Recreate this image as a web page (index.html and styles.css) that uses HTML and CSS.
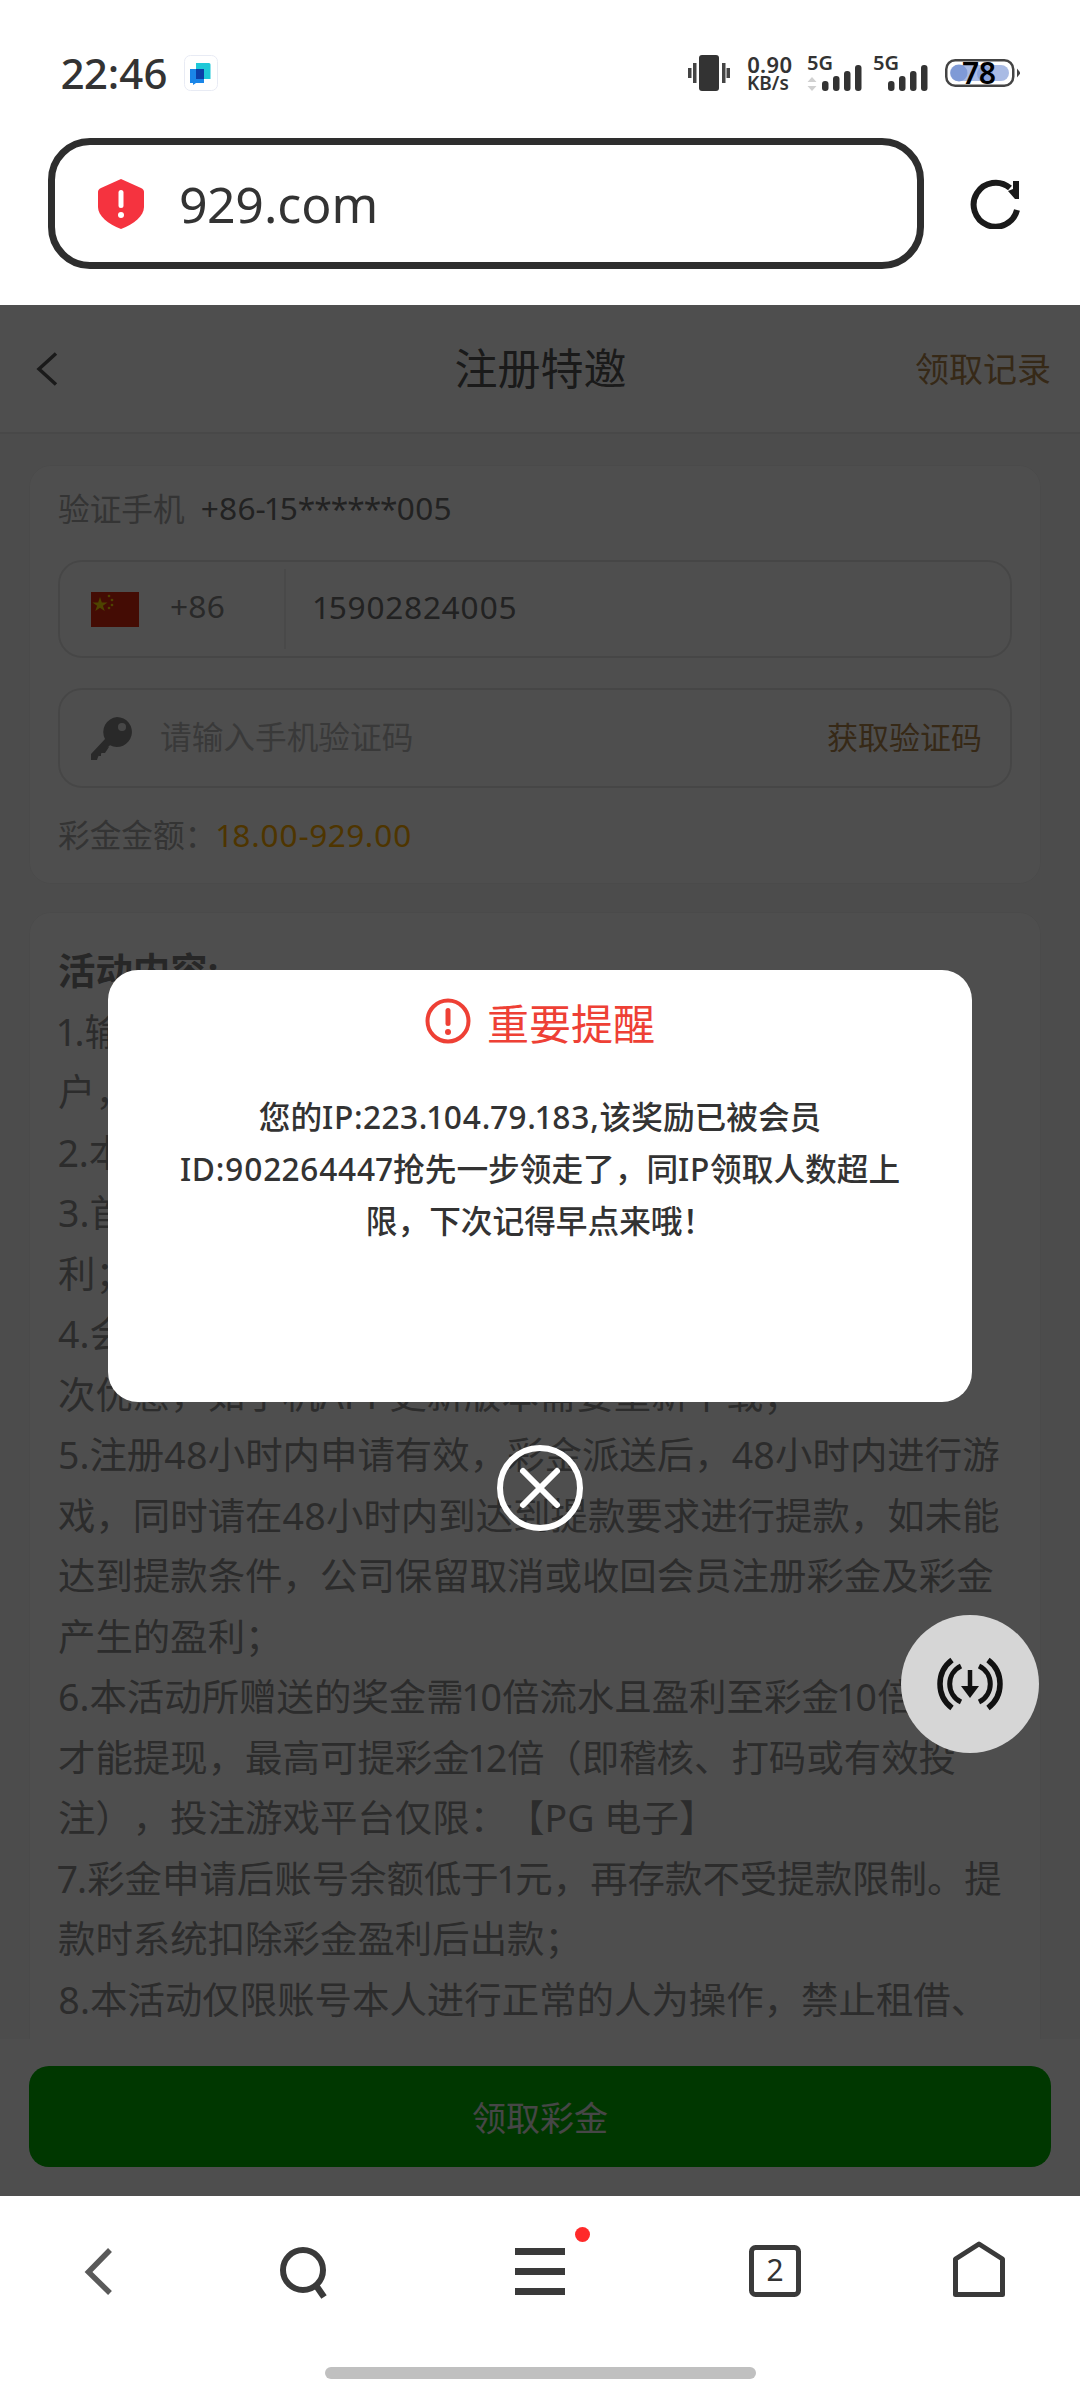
FILE: index.html
```html
<!DOCTYPE html>
<html lang="zh-CN">
<head>
<meta charset="utf-8">
<title>注册特邀</title>
<link rel="stylesheet" href="styles.css">
</head>
<body>
<div class="screen">
  <header class="statusbar">
    <span class="time">22:46</span>
    <svg class="appicon" viewBox="0 0 34 36"><rect x=".5" y=".5" width="33" height="35" rx="6" fill="#fff" stroke="#e8ebf4"/><path d="M12 8h13a1.5 1.5 0 0 1 1.500 1.500V24H12z" fill="#1fc8d8"/><path d="M6 14h14v14h-8l-3 2v-2H6z" fill="#1a86e8"/><rect x="12" y="14" width="8" height="10" fill="#0b3fa8"/></svg>
    <div class="status-right">
      <svg class="vib" viewBox="0 0 42 36"><rect x="11" y="0" width="20" height="36" rx="3" fill="#333"/><rect x="0" y="13" width="3.500" height="10" fill="#444"/><rect x="5" y="8" width="3.500" height="20" fill="#444"/><rect x="34" y="8" width="3.500" height="20" fill="#444"/><rect x="38.500" y="13" width="3.500" height="10" fill="#444"/></svg>
      <div class="speed"><span class="speed-num">0.90</span><span class="speed-unit">KB/s</span></div>
      <div class="net">
        <svg class="net-bars" viewBox="0 0 55 36"><path d="M5 22l4.500 5h-9zM5 36l4.500-5h-9z" fill="#d0d0d0"/><rect x="15" y="26" width="6.500" height="10" rx="3" fill="#333"/><rect x="26" y="21" width="6.500" height="15" rx="3" fill="#333"/><rect x="37" y="16" width="6.500" height="20" rx="3" fill="#333"/><rect x="48" y="10" width="6.500" height="26" rx="3" fill="#333"/></svg>
        <span class="net-label">5G</span>
      </div>
      <div class="net">
        <svg class="net-bars" viewBox="0 0 55 36"><rect x="15" y="26" width="6.500" height="10" rx="3" fill="#333"/><rect x="26" y="21" width="6.500" height="15" rx="3" fill="#333"/><rect x="37" y="16" width="6.500" height="20" rx="3" fill="#333"/><rect x="48" y="10" width="6.500" height="26" rx="3" fill="#333"/></svg>
        <span class="net-label">5G</span>
      </div>
      <div class="battery">
        <svg class="battery-art" viewBox="0 0 75 28"><rect x="1.250" y="1.250" width="67" height="25.500" rx="9" fill="#fff" stroke="#444" stroke-width="2.500"/><rect x="5" y="6" width="59" height="16" rx="8" fill="#a9bbe4"/><circle cx="14" cy="14" r="8.500" fill="#7f9ad6"/><circle cx="40" cy="15" r="8" fill="#8aa3da"/><path d="M72 9.500l3.500 4.500-3.500 4.500z" fill="#444"/></svg>
        <span class="battery-num">78</span>
      </div>
    </div>
  </header>

  <div class="toolbar">
    <div class="urlbox">
      <svg class="shield" viewBox="0 0 46 50"><path d="M23 0l20 9c2 1 3 2 3 4v15c0 9-10 17-23 22C10 45 0 37 0 28V13c0-2 1-3 3-4z" fill="#f5333f"/><rect x="20.500" y="11" width="5" height="18" rx="2.500" fill="#fff"/><circle cx="23" cy="36" r="3" fill="#fff"/></svg>
      <span class="url">929.com</span>
    </div>
    <svg class="reload" viewBox="0 0 50 50"><path d="M47 31A22 22 0 1 1 40 9" fill="none" stroke="#1a1a1a" stroke-width="6"/><path d="M43 2h6v18h-4l-7-8 5-2z" fill="#1a1a1a"/></svg>
  </div>

  <main class="page">
    <div class="page-head">
      <svg class="head-back" viewBox="0 0 22 34"><path d="M20 1.500L3 17l17 15.500" fill="none" stroke="#555" stroke-width="3.500"/></svg>
      <h1 class="head-title">注册特邀</h1>
      <a class="head-link">领取记录</a>
    </div>

    <section class="card form-card">
      <div class="verify-line"><span class="muted">验证手机</span><span class="verify-num">+86-15<span class="stars">******</span>005</span></div>
      <div class="field phone-field">
        <svg class="flag" viewBox="0 0 48 35"><rect width="48" height="35" fill="#de2910"/><path d="M9 5l1.800 5.400h5.700l-4.600 3.300 1.800 5.400L9 15.800l-4.700 3.300 1.800-5.400-4.600-3.300h5.700z" fill="#ffde00"/><circle cx="18" cy="4" r="1.300" fill="#ffde00"/><circle cx="21" cy="8" r="1.300" fill="#ffde00"/><circle cx="21" cy="13" r="1.300" fill="#ffde00"/><circle cx="18" cy="16" r="1.300" fill="#ffde00"/></svg>
        <span class="dial">+86</span>
        <span class="phone-num">15902824005</span>
      </div>
      <div class="field code-field">
        <svg class="key" viewBox="0 0 41 43"><path d="M26 0a15 15 0 1 1-7 28.300L6 40.500V43H0v-6L14 22A15 15 0 0 1 26 0z" fill="#888"/><path d="M6 43v-4h4v-3h4l4-6-8 1z" fill="#888"/><circle cx="31" cy="10" r="4" fill="#e8e8e8"/></svg>
        <span class="placeholder">请输入手机验证码</span>
        <a class="get-code">获取验证码</a>
      </div>
      <div class="bonus-line"><span class="muted">彩金金额：</span><span class="bonus">18.00-929.00</span></div>
    </section>

    <section class="card rules-card">
      <p class="rules-head">活动内容:</p>
      <p>1.输入手机号码及验证码即可领取彩金，每个账<br>户，每个设备仅可领取一次；</p>
      <p>2.本活动每位会员仅限领取一次；</p>
      <p>3.首次申请彩金的会员可享受此项福<br>利；</p>
      <p>4.会员在本平台注册后，每位会员只能享受一<br>次优惠，如手机APP更新版本需要重新下载；</p>
      <p>5.注册48小时内申请有效，彩金派送后，48小时内进行游<br>戏，同时请在48小时内到达到提款要求进行提款，如未能<br>达到提款条件，公司保留取消或收回会员注册彩金及彩金<br>产生的盈利；</p>
      <p>6.本活动所赠送的奖金需10倍流水且盈利至彩金10倍<br>才能提现，最高可提彩金12倍（即稽核、打码或有效投<br>注），投注游戏平台仅限：【PG 电子】</p>
      <p>7.彩金申请后账号余额低于1元，再存款不受提款限制。提<br>款时系统扣除彩金盈利后出款；</p>
      <p>8.本活动仅限账号本人进行正常的人为操作，禁止租借、</p>
    </section>

    <div class="claim-bar"><button class="claim-btn">领取彩金</button></div>

    <div class="overlay"></div>

    <div class="modal">
      <div class="modal-title">
        <svg class="alert" viewBox="0 0 46 46"><circle cx="23" cy="23" r="20.500" fill="none" stroke="#ee4035" stroke-width="4"/><rect x="20.500" y="10" width="5" height="18" rx="2.500" fill="#ee4035"/><circle cx="23" cy="34" r="3" fill="#ee4035"/></svg>
        <span>重要提醒</span>
      </div>
      <p class="modal-text">您的<span class="latin">IP:223.104.79.183,</span>该奖励已被会员<br><span class="latin">ID:902264447</span>抢先一步领走了，同<span class="latin">IP</span>领取人数超上<br>限，下次记得早点来哦！</p>
    </div>

    <svg class="modal-close" viewBox="0 0 86 86"><circle cx="43" cy="43" r="40" fill="none" stroke="#fff" stroke-width="6"/><path d="M26 26l34 34M60 26L26 60" fill="none" stroke="#fff" stroke-width="6" stroke-linecap="round"/></svg>

    <div class="float-btn">
      <svg class="float-icon" viewBox="-35 -35 70 70"><g fill="none" stroke="#111"><path d="M-18-24a30 30 0 0 0 0 48M18-24a30 30 0 0 1 0 48" stroke-width="5.500"/><path d="M-9-18a20 20 0 0 0 0 36M9-18a20 20 0 0 1 0 36" stroke-width="5"/><path d="M0-14V6" stroke-width="4.500"/></g><path d="M-9 2H9L0 14z" fill="#111"/></svg>
    </div>
  </main>

  <nav class="bottom-nav">
    <div class="nav-icons">
      <div class="nav-cell"><svg class="nav-icon" viewBox="0 0 60 60"><path d="M41 9L19.500 31 41 52" fill="none" stroke="#5a5a5a" stroke-width="5.500"/></svg></div>
      <div class="nav-cell"><svg class="nav-icon" viewBox="0 0 60 60"><circle cx="30" cy="29" r="20" fill="none" stroke="#3a3a3a" stroke-width="6"/><path d="M42 43l9 13" fill="none" stroke="#3a3a3a" stroke-width="6.500"/></svg></div>
      <div class="nav-cell"><span class="menu-wrap"><svg class="nav-icon" viewBox="0 0 60 60"><rect x="5" y="7" width="50" height="7" fill="#3a3a3a"/><rect x="5" y="27" width="50" height="7" fill="#3a3a3a"/><rect x="5" y="47" width="50" height="7" fill="#3a3a3a"/></svg><i class="red-dot"></i></span></div>
      <div class="nav-cell"><svg class="nav-icon" viewBox="0 0 60 60"><rect x="6.500" y="6.500" width="47" height="47" rx="4" fill="none" stroke="#3a3a3a" stroke-width="5"/><text class="tab-count" x="30" y="40" text-anchor="middle">2</text></svg></div>
      <div class="nav-cell"><svg class="nav-icon" viewBox="0 0 60 60"><path d="M6.500 18L30 3l23.500 15v35.500h-47z" fill="none" stroke="#3a3a3a" stroke-width="5" stroke-linejoin="round"/></svg></div>
    </div>
    <div class="home-bar"></div>
  </nav>
</div>
</body>
</html>
```

FILE: styles.css
```css
* { box-sizing: border-box; }
html, body { margin: 0; padding: 0; }
body { font-family: "Noto Sans", "Noto Sans CJK SC", sans-serif; background: #fff; font-variant-numeric: proportional-nums; text-spacing-trim: space-all; }
p, h1 { margin: 0; }
svg { display: block; flex: none; }

.screen { width: 1080px; height: 2400px; display: flex; flex-direction: column; overflow: hidden; background: #fff; }

/* status bar */
.statusbar { height: 138px; padding: 0 60px; display: flex; align-items: flex-start; flex: none; color: #333; }
.time { font-size: 42px; font-weight: 500; line-height: 46px; margin: 50px 0 0 1px; width: 106px; white-space: nowrap; }
.appicon { width: 34px; height: 36px; margin: 55px 0 0 17px; }
.status-right { margin-left: auto; margin-top: 55px; display: flex; align-items: flex-start; height: 36px; }
.vib { width: 42px; height: 36px; }
.speed { display: flex; flex-direction: column; margin-left: 17px; width: 44px; font-weight: 600; white-space: nowrap; }
.speed-num { font-size: 22px; line-height: 19px; }
.speed-unit { font-size: 19px; line-height: 19px; }
.net { display: grid; width: 55px; height: 36px; margin-left: 16px; }
.net + .net { margin-left: 11px; }
.net > * { grid-area: 1 / 1; }
.net-bars { width: 55px; height: 36px; }
.net-label { font-size: 20px; line-height: 16px; font-weight: 600; color: #333; }
.battery { display: grid; width: 75px; height: 28px; margin: 4px 0 0 17px; }
.battery > * { grid-area: 1 / 1; }
.battery-art { width: 75px; height: 28px; }
.battery-num { font-size: 30px; line-height: 28px; font-weight: 600; color: #000; width: 69px; text-align: center; }

/* address bar */
.toolbar { height: 167px; padding: 0 60px 36px 48px; display: flex; align-items: center; flex: none; }
.urlbox { width: 876px; height: 131px; border: 7px solid #2e2e2e; border-radius: 42px; display: flex; align-items: center; padding-left: 43px; }
.shield { width: 46px; height: 50px; }
.url { font-size: 50px; color: #333; margin-left: 35px; line-height: 60px; }
.reload { width: 50px; height: 50px; margin-left: 46px; }

/* page below the bars */
.page { position: relative; flex: 1; overflow: hidden; background: #f9f9f9; display: flex; flex-direction: column; }
.page-head { height: 129px; flex: none; display: grid; grid-template-columns: 1fr auto 1fr; align-items: center; padding: 0 29px 0 36px; border-bottom: 2px solid #eaeaea; background: #fff; }
.head-back { width: 22px; height: 34px; }
.head-title { font-size: 43px; font-weight: 400; color: #555; line-height: 56px; margin-right: 6px; }
.head-link { font-size: 34px; color: #b2854c; justify-self: end; line-height: 48px; }

.card { background: #fff; margin: 0 29px; width: 1012px; border: 1px solid #f3f3f3; border-radius: 22px; flex: none; }
.form-card { margin-top: 31px; padding: 20px 28px 26px; height: 419px; }
.verify-line { display: flex; align-items: center; height: 42px; font-size: 31.68px; }
.muted { color: #aaa; }
.verify-num { color: #707070; margin-left: 16px; }
.stars { letter-spacing: -1px; }
.field { display: flex; align-items: center; border: 2px solid #e6e6e6; border-radius: 24px; padding-left: 31px; }
.phone-field { margin-top: 32px; height: 98px; }
.code-field { margin-top: 30px; height: 100px; padding-right: 28px; }
.flag { width: 48px; height: 35px; }
.dial { font-size: 31.68px; color: #888; margin-left: 31px; width: 116px; height: 80px; line-height: 74px; border-right: 2px solid #eeeeee; }
.phone-num { font-size: 31.68px; color: #707070; margin: 0 0 6px 28px; letter-spacing: .7px; }
.key { width: 41px; height: 43px; }
.placeholder { font-size: 31.68px; color: #bbb; margin: 0 0 6px 28px; }
.get-code { font-size: 31px; color: #b2854c; margin: 0 0 6px auto; }
.bonus-line { margin-top: 24px; font-size: 31.68px; line-height: 46px; }
.bonus { color: #ffae00; margin-left: 1px; letter-spacing: .6px; }

.rules-card { margin-top: 28px; padding: 28px 28px; font-size: 37.44px; line-height: 60.5px; color: #909090; white-space: nowrap; height: 1300px; }
.rules-head { font-weight: 700; color: #808080; }

.claim-bar { position: absolute; left: 0; right: 0; top: 1734px; height: 157px; background: #fff; padding: 27px 29px 0; }
.claim-btn { display: block; width: 1022px; height: 101px; border: 0; border-radius: 20px; background: #00b300; color: #e6e6e6; font-size: 34px; font-family: inherit; }

.overlay { position: absolute; inset: 0; background: rgba(0, 0, 0, .695); }

.modal { position: absolute; left: 108px; top: 665px; width: 864px; height: 432px; background: #fff; border-radius: 30px; }
.modal-title { display: flex; align-items: center; justify-content: center; gap: 16px; height: 102px; font-size: 42px; color: #ee4035; }
.alert { width: 46px; height: 46px; }
.modal-text { margin-top: 19px; text-align: center; font-size: 31.68px; line-height: 52px; font-weight: 500; color: #333; white-space: nowrap; }
.latin { letter-spacing: .7px; }

.modal-close { position: absolute; left: 497px; top: 1140px; width: 86px; height: 86px; }

.float-btn { position: absolute; left: 901px; top: 1310px; width: 138px; height: 138px; border-radius: 50%; background: #d6d6d6; display: flex; align-items: center; justify-content: center; }
.float-icon { width: 70px; height: 70px; }

/* bottom navigation */
.bottom-nav { height: 204px; flex: none; background: #fff; padding-top: 45px; display: flex; flex-direction: column; align-items: center; }
.nav-icons { display: grid; grid-template-columns: 198px 210px 264px 206px 202px; width: 1080px; height: 60px; }
.nav-cell { display: flex; justify-content: center; }
.nav-icon { width: 60px; height: 60px; }
.tab-count { font-size: 30px; fill: #333; font-family: "Noto Sans", sans-serif; }
.menu-wrap { position: relative; display: block; width: 60px; height: 60px; }
.red-dot { position: absolute; left: 65px; top: -14px; width: 15px; height: 15px; border-radius: 50%; background: #ff2a2a; }
.home-bar { width: 431px; height: 12px; border-radius: 6px; background: #c0c0c0; margin-top: 66px; }
```
